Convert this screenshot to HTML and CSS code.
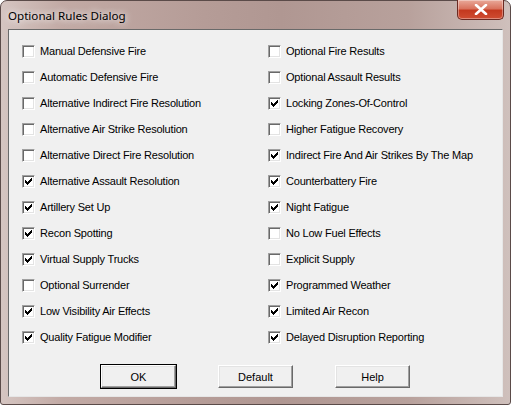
FILE: index.html
```html
<!DOCTYPE html>
<html lang="en">
<head>
    <meta charset="UTF-8">
    <title>Optional Rules Dialog</title>
    <link rel="stylesheet" href="styles.css">
</head>
<body>

<div class="window">
    <div class="titlebar">
        <span class="title">Optional Rules Dialog</span>
        <button class="close" type="button">
            <svg width="14" height="11" viewBox="0 0 14 11">
                <path d="M2 1 L12 10 M12 1 L2 10" stroke="#ffffff" stroke-width="2.6" stroke-linecap="round" fill="none"/>
            </svg>
        </button>
    </div>

    <div class="client">
        <div class="options">
            <!-- fila 1 -->
            <label class="opt"><span class="box"></span>Manual Defensive Fire</label>
            <label class="opt"><span class="box"></span>Optional Fire Results</label>

            <label class="opt"><span class="box"></span>Automatic Defensive Fire</label>
            <label class="opt"><span class="box"></span>Optional Assault Results</label>

            <label class="opt"><span class="box"></span>Alternative Indirect Fire Resolution</label>
            <label class="opt"><span class="box checked"></span>Locking Zones-Of-Control</label>

            <label class="opt"><span class="box"></span>Alternative Air Strike Resolution</label>
            <label class="opt"><span class="box"></span>Higher Fatigue Recovery</label>

            <label class="opt"><span class="box"></span>Alternative Direct Fire Resolution</label>
            <label class="opt"><span class="box checked"></span>Indirect Fire And Air Strikes By The Map</label>

            <label class="opt"><span class="box checked"></span>Alternative Assault Resolution</label>
            <label class="opt"><span class="box checked"></span>Counterbattery Fire</label>

            <label class="opt"><span class="box checked"></span>Artillery Set Up</label>
            <label class="opt"><span class="box checked"></span>Night Fatigue</label>

            <label class="opt"><span class="box checked"></span>Recon Spotting</label>
            <label class="opt"><span class="box"></span>No Low Fuel Effects</label>

            <label class="opt"><span class="box checked"></span>Virtual Supply Trucks</label>
            <label class="opt"><span class="box"></span>Explicit Supply</label>

            <label class="opt"><span class="box"></span>Optional Surrender</label>
            <label class="opt"><span class="box checked"></span>Programmed Weather</label>

            <label class="opt"><span class="box checked"></span>Low Visibility Air Effects</label>
            <label class="opt"><span class="box checked"></span>Limited Air Recon</label>

            <label class="opt"><span class="box checked"></span>Quality Fatigue Modifier</label>
            <label class="opt"><span class="box checked"></span>Delayed Disruption Reporting</label>
        </div>

        <div class="buttons">
            <button type="button" class="btn default-btn">OK</button>
            <button type="button" class="btn">Default</button>
            <button type="button" class="btn">Help</button>
        </div>
    </div>
</div>

</body>
</html>
```

FILE: styles.css
```css
/* Ventana estilo Windows 7 basico */
body {
    margin: 0;
    padding: 0;
    background: #ffffff;
}

.window {
    width: 511px;
    height: 405px;
    box-sizing: border-box;
    border: 1px solid #5b4b49;
    border-radius: 7px 7px 3px 3px;
    background: linear-gradient(90deg, #d5c5c1 0%, #c2aaa5 12%, #b59c97 40%, #b09792 55%, #b8a19c 80%, #cfc0bc 100%);
    padding: 0 7px 7px 7px;
    display: flex;
    flex-direction: column;
}

.titlebar {
    height: 28px;
    display: flex;
    align-items: flex-start;
    justify-content: space-between;
}

.title {
    font-family: "Noto Sans", sans-serif;
    font-size: 11.6px;
    color: #000;
    padding: 7px 0 0 0;
    text-shadow: 0 0 6px rgba(255, 255, 255, 0.9), 0 0 10px rgba(255, 255, 255, 0.7);
}

.close {
    width: 47px;
    height: 20px;
    margin: -1px -1px 0 0;
    border: 1px solid #6b2a22;
    border-top: none;
    border-radius: 0 0 5px 5px;
    background: linear-gradient(180deg, #e9a99a 0%, #d9735e 45%, #c4391f 55%, #cf4d32 100%);
    box-shadow: inset 0 0 0 1px rgba(255, 255, 255, 0.35);
    display: flex;
    align-items: center;
    justify-content: center;
    padding: 0;
}

.client {
    flex: 1;
    background: #f0f0f0;
    border-top: 1px solid #6a6a6a;
    border-left: 1px solid #6a6a6a;
    border-right: 1px solid #e6e6e6;
    border-bottom: 1px solid #e6e6e6;
    font-family: "Liberation Sans", Arial, sans-serif;
    font-size: 11px;
    letter-spacing: -0.2px;
    color: #000;
}

.options {
    display: grid;
    grid-template-columns: 246px 1fr;
    grid-auto-rows: 26px;
    padding: 8px 0 0 13px;
}

.opt {
    display: flex;
    align-items: center;
    gap: 5px;
    white-space: nowrap;
}

/* casilla clasica 3D */
.box {
    width: 13px;
    height: 13px;
    box-sizing: border-box;
    border-top: 1px solid #a0a0a0;
    border-left: 1px solid #a0a0a0;
    border-right: 1px solid #ffffff;
    border-bottom: 1px solid #ffffff;
    box-shadow: inset 1px 1px 0 #696969, inset -1px -1px 0 #e3e3e3;
    background: #ffffff;
    flex: none;
}

.box.checked {
    background: #ffffff url("data:image/svg+xml,%3Csvg xmlns='http://www.w3.org/2000/svg' width='7' height='7' viewBox='0 0 7 7' shape-rendering='crispEdges'%3E%3Cpath d='M6 0h1v1h-1z M5 1h2v1h-2z M0 2h1v1h-1z M4 2h3v1h-3z M0 3h2v1h-2z M3 3h3v1h-3z M0 4h5v1h-5z M1 5h3v1h-3z M2 6h1v1h-1z' fill='%23000'/%3E%3C/svg%3E") no-repeat 2px 2px;
}

.buttons {
    display: flex;
    gap: 42px;
    padding: 15px 0 0 92px;
}

.btn {
    width: 75px;
    height: 23px;
    box-sizing: border-box;
    font-family: "Liberation Sans", Arial, sans-serif;
    font-size: 11px;
    color: #000;
    background: #f0f0f0;
    border-top: 1px solid #ffffff;
    border-left: 1px solid #ffffff;
    border-right: 1px solid #696969;
    border-bottom: 1px solid #696969;
    box-shadow: inset -1px -1px 0 #a0a0a0, inset 1px 1px 0 #e3e3e3;
    padding: 0;
}

.default-btn {
    outline: 1px solid #000;
}
```
